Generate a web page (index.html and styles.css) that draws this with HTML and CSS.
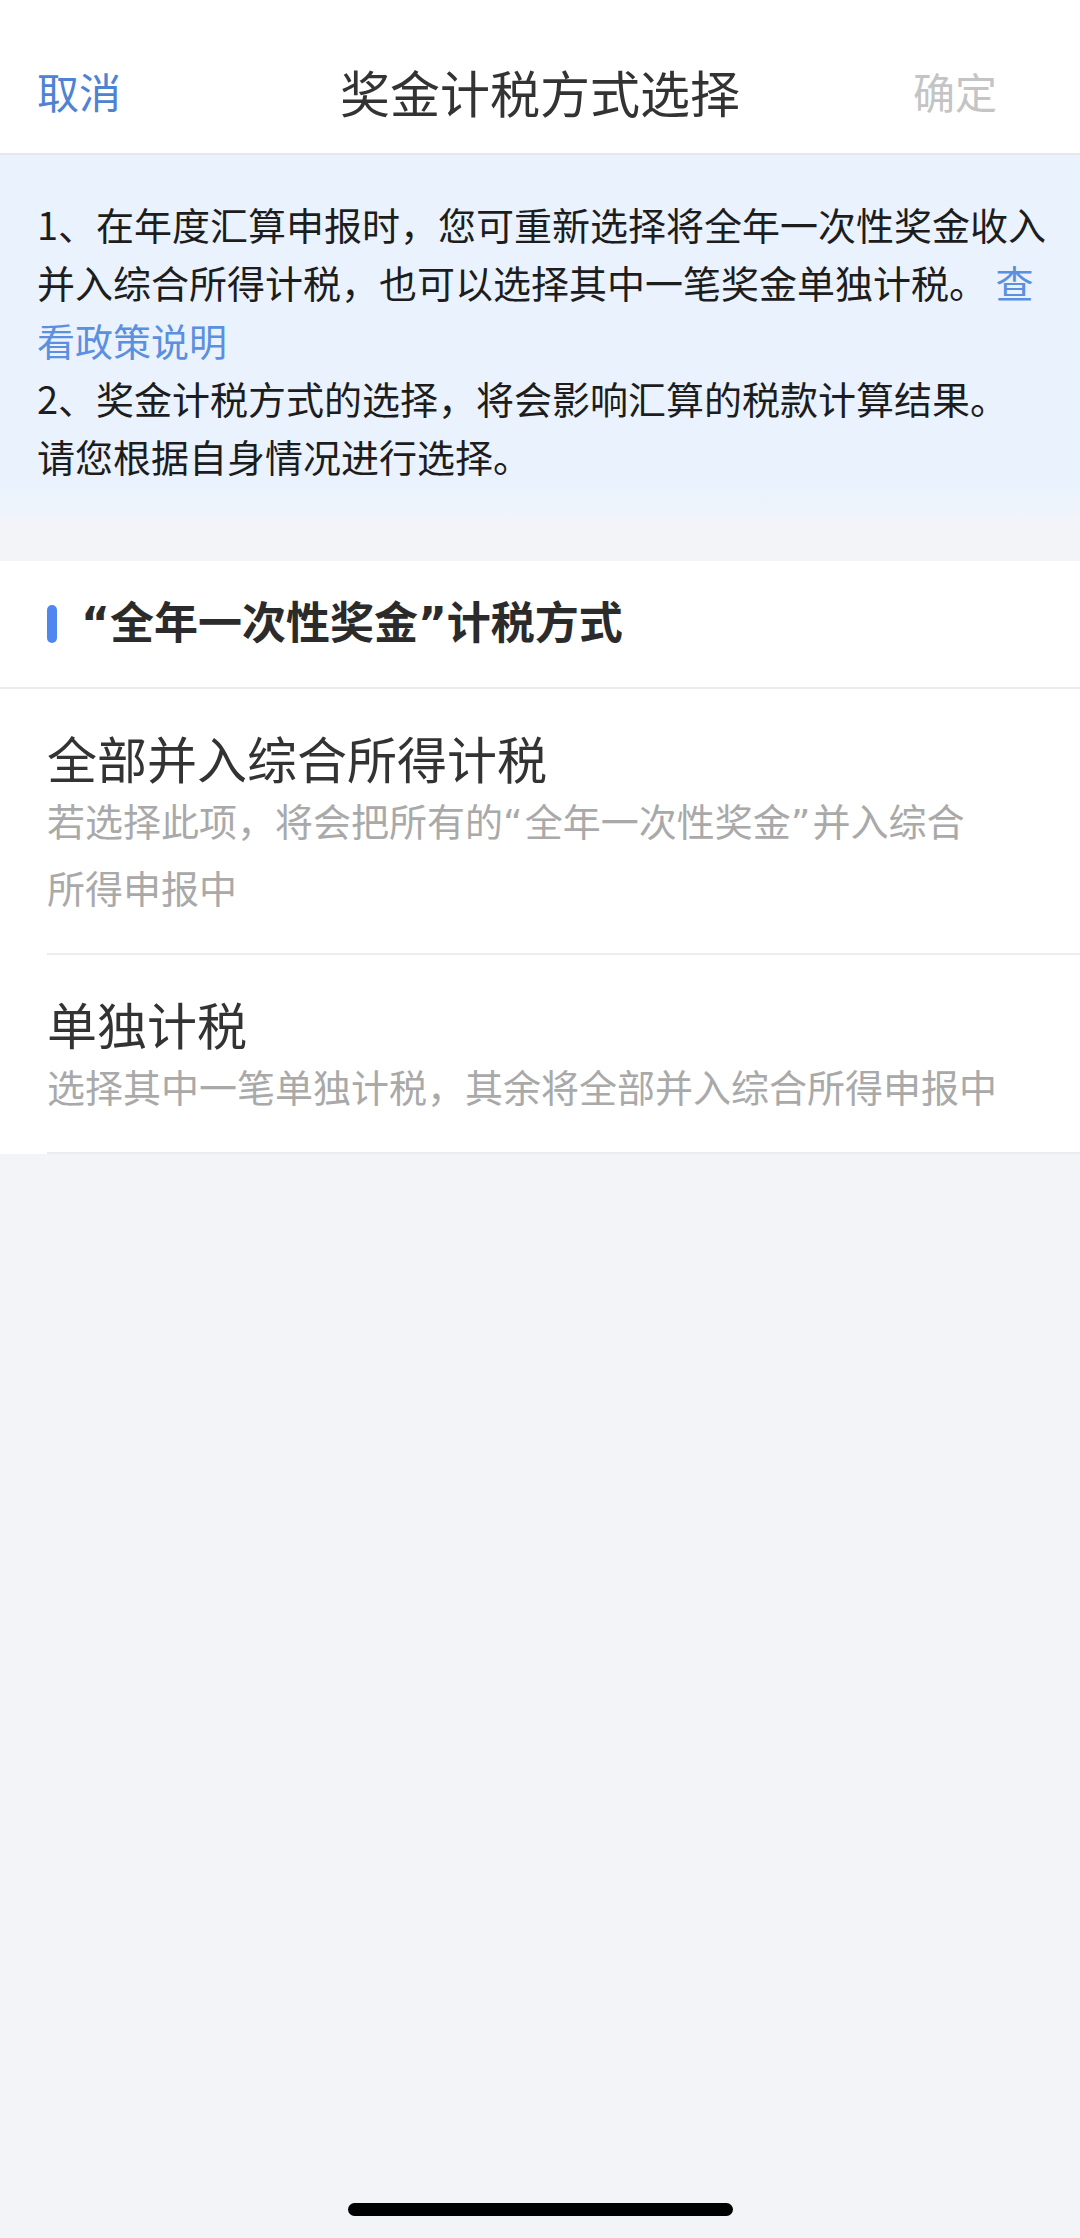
FILE: index.html
```html
<!DOCTYPE html>
<html lang="zh-CN">
<head>
<meta charset="utf-8">
<title>奖金计税方式选择</title>
<link rel="stylesheet" href="styles.css">
</head>
<body>
<div class="screen">
  <header class="nav">
    <span class="nav-cancel">取消</span>
    <h1 class="nav-title">奖金计税方式选择</h1>
    <span class="nav-ok">确定</span>
  </header>

  <section class="notice">
    <p>1、在年度汇算申报时，您可重新选择将全年一次性奖金收入并入综合所得计税，也可以选择其中一笔奖金单独计税。 <a class="link">查看政策说明</a></p>
    <p>2、奖金计税方式的选择，将会影响汇算的税款计算结果。<br>请您根据自身情况进行选择。</p>
  </section>

  <section class="card">
    <div class="card-head">
      <span class="bar"></span>
      <h2 class="card-title">“全年一次性奖金”计税方式</h2>
    </div>
    <ul class="options">
      <li class="option">
        <div class="option-title">全部并入综合所得计税</div>
        <div class="option-desc">若选择此项，将会把所有的<span class="q">“</span>全年一次性奖金<span class="q">”</span>并入综合<br>所得申报中</div>
      </li>
      <li class="option">
        <div class="option-title">单独计税</div>
        <div class="option-desc">选择其中一笔单独计税，其余将全部并入综合所得申报中</div>
      </li>
    </ul>
  </section>

  <div class="home-bar"></div>
</div>
</body>
</html>
```

FILE: styles.css
```css
html, body {
  margin: 0;
  padding: 0;
}

body {
  background: #f3f4f8;
  font-family: "Noto Sans CJK SC", sans-serif;
}

.screen {
  width: 1080px;
  min-height: 2238px;
  display: flex;
  flex-direction: column;
}

/* Navigation bar */
.nav {
  box-sizing: border-box;
  height: 155px;
  padding: 60px 37px 31px;
  background: #ffffff;
  border-bottom: 2px solid #e7e8eb;
  display: grid;
  grid-template-columns: 1fr auto 1fr;
  align-items: center;
}

.nav-cancel {
  font-size: 42px;
  line-height: 62px;
  color: #4e82d3;
}

.nav-title {
  margin: 0;
  font-size: 50px;
  line-height: 62px;
  font-weight: 400;
  color: #333333;
}

.nav-ok {
  justify-self: end;
  margin-right: 46px;
  font-size: 42px;
  line-height: 62px;
  color: #c4c4c4;
}

/* Notice */
.notice {
  padding: 40px 22px 45px 37px;
  background: linear-gradient(#eaf3fd 0, #eaf3fd calc(100% - 45px), #f3f4f8 100%);
  font-size: 38px;
  line-height: 58px;
  color: #1d1d1d;
}

.notice p {
  margin: 0;
}

.link {
  color: #5b8fe0;
}

/* Card */
.card {
  margin-top: 31px;
  background: #ffffff;
}

.card-head {
  box-sizing: border-box;
  height: 128px;
  padding-left: 47px;
  display: flex;
  align-items: center;
  border-bottom: 2px solid #ececec;
}

.bar {
  width: 10px;
  height: 38px;
  border-radius: 5px;
  background: #4f86ef;
  margin-right: 24px;
}

.card-title {
  margin: 0;
  font-family: "DejaVu Sans", "Noto Sans CJK SC", sans-serif;
  font-size: 44px;
  line-height: 60px;
  font-weight: 700;
  color: #2b2b2b;
}

.q {
  font-family: "DejaVu Sans", sans-serif;
  letter-spacing: 2px;
}

.options {
  list-style: none;
  margin: 0;
  padding: 0 0 0 47px;
}

.option {
  padding: 37px 81px 35px 0;
  border-bottom: 2px solid #ededed;
}

.option-title {
  font-size: 50px;
  line-height: 62px;
  color: #333333;
}

.option-desc {
  font-size: 38px;
  line-height: 63px;
  color: #a9a9a9;
}

/* Home indicator */
.home-bar {
  margin: auto auto 22px;
  width: 385px;
  height: 13px;
  border-radius: 7px;
  background: #000000;
}
```
